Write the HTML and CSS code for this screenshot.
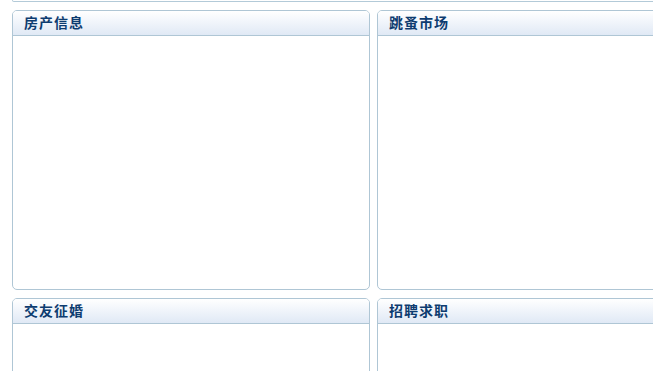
FILE: index.html
```html
<!DOCTYPE html>
<html lang="zh">
<head>
<meta charset="utf-8">
<title>分类信息</title>
<link rel="stylesheet" href="styles.css">
</head>
<body>
<div class="page">
  <div class="topbox"></div>
  <div class="grid">
    <section class="panel">
      <h2 class="panel-head">房产信息</h2>
      <div class="panel-body"></div>
    </section>
    <section class="panel">
      <h2 class="panel-head">跳蚤市场</h2>
      <div class="panel-body"></div>
    </section>
    <section class="panel">
      <h2 class="panel-head">交友征婚</h2>
      <div class="panel-body"></div>
    </section>
    <section class="panel">
      <h2 class="panel-head">招聘求职</h2>
      <div class="panel-body"></div>
    </section>
  </div>
</div>
</body>
</html>
```

FILE: styles.css
```css
html, body {
  margin: 0;
  padding: 0;
  background: #ffffff;
  overflow: hidden;
}

.page {
  padding-left: 12px;
  width: 723px;
  font-family: "Noto Sans CJK SC", "Liberation Sans", sans-serif;
}

.topbox {
  height: 1px;
  border: 1px solid #b3cad8;
  border-top: none;
  border-radius: 0 0 5px 5px;
  margin-bottom: 8px;
}

.grid {
  display: grid;
  grid-template-columns: 358px 358px;
  grid-auto-rows: 280px;
  column-gap: 7px;
  row-gap: 8px;
}

.panel {
  border: 1px solid #afc6d5;
  border-radius: 5px;
  display: flex;
  flex-direction: column;
  overflow: hidden;
  background: #ffffff;
}

.panel-head {
  margin: 0;
  height: 24px;
  line-height: 22px;
  padding-left: 11px;
  font-size: 14px;
  font-weight: bold;
  letter-spacing: 1px;
  color: #0d3c70;
  background: linear-gradient(to bottom, #ffffff 0%, #f1f5fb 45%, #e0e9f5 100%);
  border-bottom: 1px solid #afc6d5;
}

.panel-body {
  flex: 1;
}
```
